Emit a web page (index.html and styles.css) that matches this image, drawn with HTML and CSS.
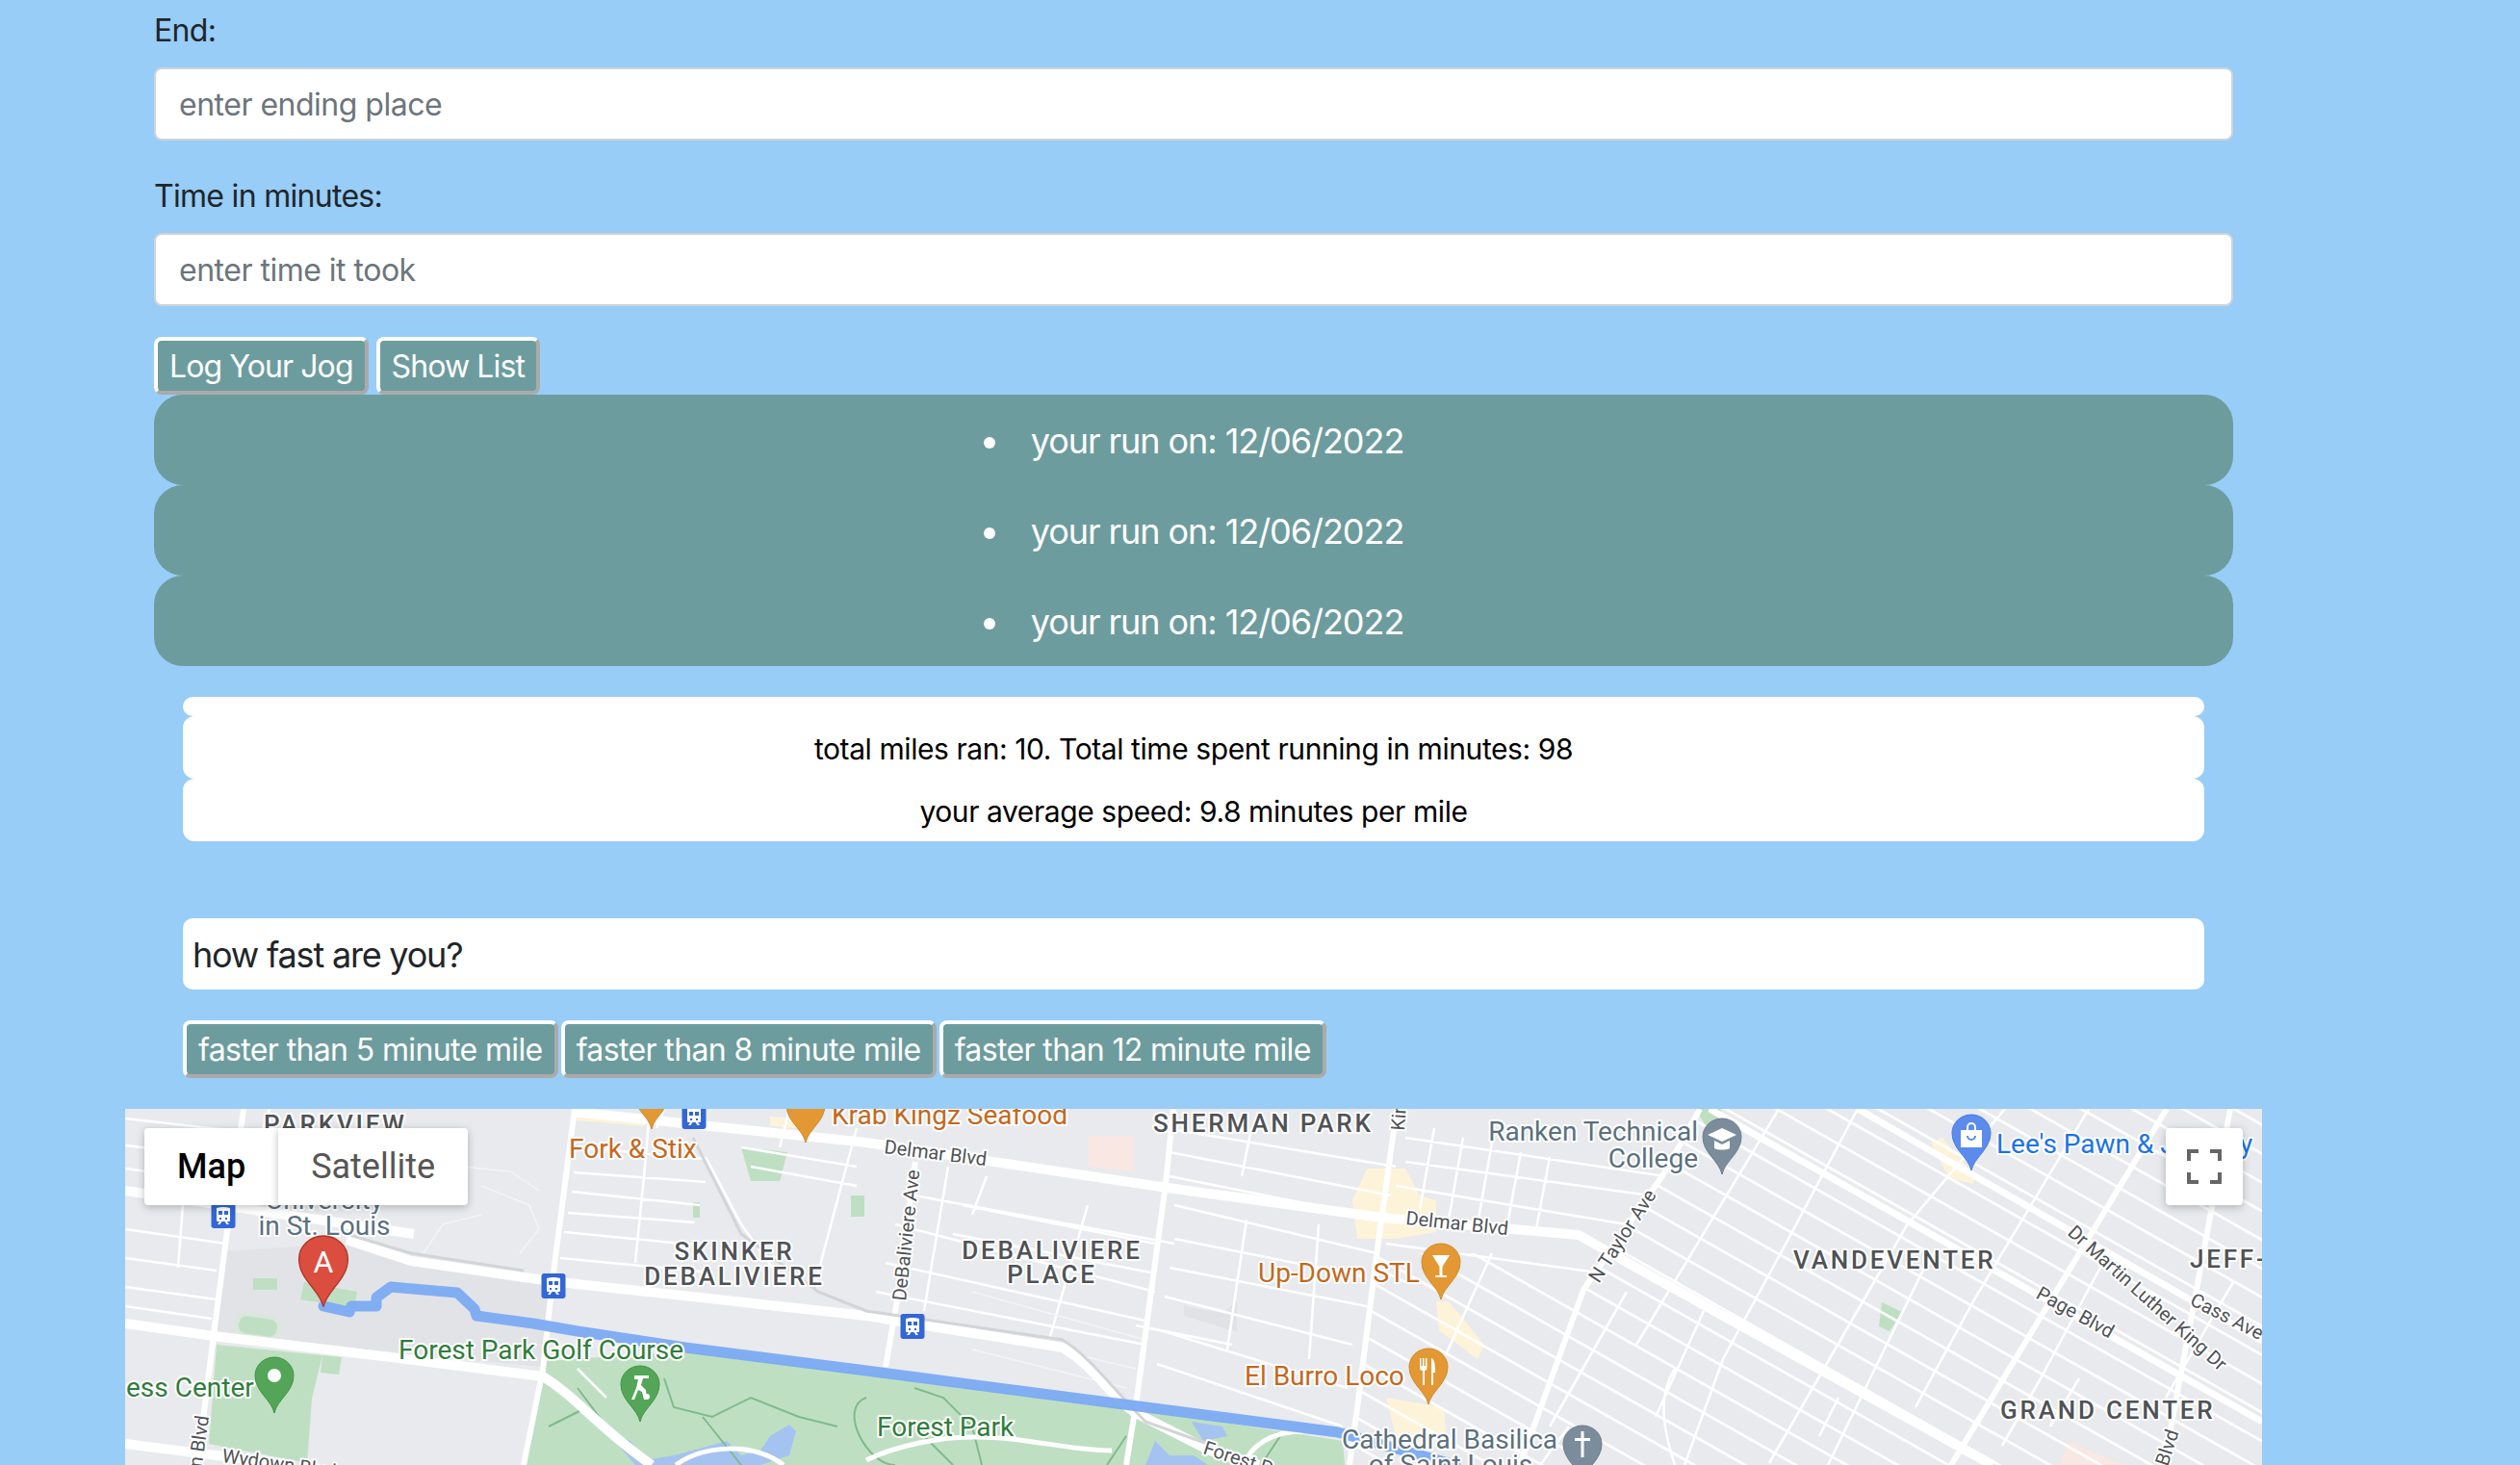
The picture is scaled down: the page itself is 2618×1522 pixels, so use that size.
FILE: index.html
```html
<!DOCTYPE html>
<html lang="en">
<head>
<meta charset="UTF-8" />
<title>Log Your Jog</title>
<link rel="stylesheet" href="styles.css">
</head>
<body>

<div class="container">
  <form class="jogForm">
    <label for="end">End:</label>
    <input type="text" id="end" placeholder="enter ending place" />

    <label for="time">Time in minutes:</label>
    <input type="text" id="time" placeholder="enter time it took" />

    <div class="btnRow">
      <button type="button">Log Your Jog</button>
      <button type="button">Show List</button>
    </div>
  </form>

  <ul class="runList">
    <li>your run on: 12/06/2022</li>
    <li>your run on: 12/06/2022</li>
    <li>your run on: 12/06/2022</li>
  </ul>

  <div class="stats">
    <div class="stat statEmpty"></div>
    <div class="stat">total miles ran: 10. Total time spent running in minutes: 98</div>
    <div class="stat">your average speed: 9.8 minutes per mile</div>
  </div>

  <div class="speedTitle">how fast are you?</div>

  <div class="btnRow speedBtns">
    <button type="button">faster than 5 minute mile</button>
    <button type="button">faster than 8 minute mile</button>
    <button type="button">faster than 12 minute mile</button>
  </div>

  <div class="map">
    <svg class="mapCanvas" viewBox="0 0 2220 370" width="2220" height="370">
      <defs>
        <pattern id="diagStreets" width="300" height="26" patternUnits="userSpaceOnUse" patternTransform="rotate(29.5)">
          <rect class="street-fill" x="0" y="12" width="300" height="2.6" />
        </pattern>
        <path id="pin" d="M0 58C-3 44-20 36-20 19A20 19 0 1 1 20 19C20 36 3 44 0 58Z" />
        <g id="transit">
          <rect class="transit-bg" x="-12.5" y="-13" width="25" height="26" rx="3" />
          <path class="white" d="M-7-8Q0-10 7-8V5Q7 6 6 6H4L6 9H3.500L1.500 6H-1.500L-3.500 9H-6L-4 6H-6Q-7 6-7 5Z" />
          <path class="transit-bg" d="M-5-5H-1V-1H-5ZM1-5H5V-1H1ZM-4 2H-2V4H-4ZM2 2H4V4H2Z" />
        </g>
      </defs>

      <!-- areas -->
      <polygon class="campus" points="100,148 230,140 440,185 434,268 95,236" />
      <polygon class="park" points="414,370 437,262 582,252 770,275 1045,311 1265,345 1267,370" />
      <polygon class="park" points="95,245 205,256 194,301 189,368 87,348" />
      <rect class="park" x="133" y="176" width="25" height="12" />
      <polygon class="park" points="186,180 241,190 238,207 182,198" />
      <rect class="park-line" x="116" y="215" width="44" height="22" rx="10" transform="rotate(8 138 226)" />
      <polygon class="park" points="205,256 225,258 222,276 203,274" />
      <polygon class="park" points="640,40 688,45 680,75 650,75" />
      <rect class="park" x="754" y="90" width="14" height="22" />
      <rect class="park" x="590" y="97" width="7" height="16" />
      <polygon class="park" points="1631,0 1657,0 1665,15 1645,22" />
      <polygon class="park" points="1825,201 1846,211 1833,231 1822,226" />
      <polygon class="beige" points="1290,62 1330,62 1345,90 1362,95 1362,128 1320,135 1280,135 1275,95" />
      <polygon class="beige" points="1362,200 1375,200 1412,245 1405,260 1365,230" />
      <polygon class="beige" points="1310,300 1370,310 1372,335 1345,360 1320,340" />
      <polygon class="beige" points="1876,35 1888,30 1922,70 1920,78 1895,72" />
      <polygon class="beige" points="465,2 540,10 540,18 470,12" />
      <polygon class="beige" points="670,8 700,10 700,20 670,18" />
      <polygon class="pink" points="1000,28 1048,28 1048,65 1000,60" />
      <polygon class="pink" points="2009,370 2019,345 2075,370" />
      <polygon class="darkblock" points="1140,212 1155,200 1155,232 1100,215 1100,205" />

      <!-- water -->
      <path class="water" d="M500 335L525 345L540 365L570 360L600 352L625 345L640 360L660 355L670 340L690 328L697 335L690 360L660 370H530Z" />
      <path class="water" d="M1108 325L1140 330L1145 340L1120 345ZM1060 370L1070 345L1085 360L1110 360L1125 370Z" />

      <!-- park trails -->
      <path class="trail" d="M470 290L500 330M560 280L570 310L610 320L650 300L700 320L740 330M770 300C740 310 770 370 800 370M820 290L850 300L880 330L890 370M1040 340L1020 370M1200 340L1180 370M440 330L480 310M600 320L640 370M830 340L860 370" />

      <!-- diagonal grid -->
      <polygon class="diag" fill="url(#diagStreets)" points="1300,150 1420,150 1515,188 1600,65 1636,0 2220,0 2220,370 1272,370" />

      <!-- minor streets -->
      <path class="road-minor" d="M0 10L105 22M0 38L105 50M0 62L105 76M0 125L105 140M0 155L95 168M0 185L95 198M0 205L90 218
        M115 25L105 80M60 100L55 165M150 0L140 30
        M470 40L605 52M466 66L603 76M464 86L597 100M460 108L592 118M456 128L600 142M452 155L610 170M448 176L650 200
        M545 0L540 60M540 60L530 160M603 50L640 120M640 40L760 60M650 60L760 80M760 20L720 170M640 120L680 175M690 0L680 40
        M470 270L500 300M560 0L552 20
        M855 60L830 210M800 120L1070 190M790 160L1060 220M780 190L1060 245M1000 100L960 240M895 70L880 110M820 90L1090 140
        M870 100L1070 140M860 130L1065 170M1090 100L1300 150M1090 135L1290 175M1085 165L1290 205M1080 195L1275 245M1075 230L1270 290M1072 265L1265 330
        M1080 20L1320 60M1085 45L1315 90M1085 70L1310 115M1170 20L1160 70M1240 120L1230 260M1165 115L1145 250M1150 245L1050 225
        M1330 30L1600 70M1330 55L1585 90M1320 80L1560 120M1310 140L1530 170M1300 165L1330 180
        M1360 20L1345 105M1390 30L1375 115M1420 35L1405 120M1450 45L1435 125M1480 50L1465 130
        M1718 0L1570 245M1800 0L1728 135L1660 260L1620 370M1953 0L1851 121L1708 368M1871 161L1769 370M1420 150L1370 260
        M1500 330L1470 370M1560 190L1480 330M1640 210L1590 320M2040 0L1920 200L1860 310M2060 150L1990 280L1950 350
        M2190 180L2120 300M1610 270C1590 300 1600 340 1610 370M1780 300L1760 340M2030 280L2000 330" />
      <path class="road-faint" d="M350 60L400 65L430 85M370 80L420 100L430 125L410 150M310 150L330 120L370 110M880 190L1060 240M880 230L1050 270M880 250L1040 290" />

      <!-- main roads -->
      <path class="road-mid" d="M123 0L108 111L92 235L75 370M467 0L444 178L434 271L414 370M1089 0L1081 78L1051 301L1040 370
        M1321 0L1301 145L1280 311L1272 370M821 55L801 205L790 268M1636 0L1600 65L1515 188L1449 370M2121 0L1897 370M2187 0L2118 370" />
      <path class="road-major" d="M465 3L770 35L1076 81L1306 113L1510 131L1570 165L1940 370M0 85L120 103L300 130" />
      <path class="road-major" d="M230 136L297 158L414 175L460 181L770 215L974 248C1010 270 1020 295 1048 315L1127 355L1178 370" />
      <path class="road-major" d="M0 223L92 236L276 258L434 278C470 300 490 330 547 370M0 348L174 370" />
      <path class="road-diag" d="M1646 0L2220 325M1800 0L2220 241" />
      <path class="road-thin" d="M572 370C600 350 650 345 684 370M770 365C800 350 850 340 882 341C930 340 980 355 1025 355M1224 335C1190 335 1168 351 1163 370" />
      <path class="rail" d="M230 130L297 150L414 168M590 30L640 130L720 190L770 210L974 240C1000 255 1030 295 1060 325L1130 350" />

      <!-- route -->
      <path class="route" d="M206 205L233 211L235 205L261 205L261 196L276 185L345 191L363 208L365 215L424 223L470 231L582 248L770 272L1045 308L1260 336L1382 370" />

      <!-- labels under the pins -->
      <text class="lbl area" x="144" y="25">PARKVIEW</text>
      <text class="lbl edu" text-anchor="middle" x="207" y="104">University</text>
      <text class="lbl edu" text-anchor="middle" x="207" y="131">in St. Louis</text>
      <text class="lbl food" x="461" y="51">Fork &amp; Stix</text>
      <text class="lbl food" x="734" y="16">Krab Kingz Seafood</text>
      <text class="lbl area" x="1068" y="24">SHERMAN PARK</text>
      <text class="lbl edu" text-anchor="end" x="1634" y="33">Ranken Technical</text>
      <text class="lbl edu" text-anchor="end" x="1634" y="61">College</text>
      <text class="lbl area" text-anchor="middle" x="633" y="157">SKINKER</text>
      <text class="lbl area" text-anchor="middle" x="633" y="183">DEBALIVIERE</text>
      <text class="lbl area" text-anchor="middle" x="963" y="156">DEBALIVIERE</text>
      <text class="lbl area" text-anchor="middle" x="963" y="181">PLACE</text>
      <text class="lbl area" x="1733" y="166">VANDEVENTER</text>
      <text class="lbl area" x="1948" y="322">GRAND CENTER</text>
      <text class="lbl area" x="2145" y="165">JEFF-</text>
      <text class="lbl park-text" x="284" y="260">Forest Park Golf Course</text>
      <text class="lbl park-text" x="1" y="299">ess Center</text>
      <text class="lbl park-text" x="781" y="340">Forest Park</text>
      <text class="lbl food" x="1177" y="180">Up-Down STL</text>
      <text class="lbl food" x="1163" y="287">El Burro Loco</text>
      <text class="lbl edu" x="1264" y="353">Cathedral Basilica</text>
      <text class="lbl edu" text-anchor="middle" x="1377" y="379">of Saint Louis</text>
      <text class="lbl shop" x="1944" y="46">Lee's Pawn &amp; Jewelry</text>

      <text class="lbl road" transform="translate(788 46) rotate(7)">Delmar Blvd</text>
      <text class="lbl road" transform="translate(1330 120) rotate(6)">Delmar Blvd</text>
      <text class="lbl road" transform="translate(811 200) rotate(-84)">DeBaliviere Ave</text>
      <text class="lbl road" transform="translate(1329 23) rotate(-86)">Kingshighway</text>
      <text class="lbl road" transform="translate(1531 182) rotate(-57)">N Taylor Ave</text>
      <text class="lbl road" transform="translate(2017 130) rotate(42)">Dr Martin Luther King Dr</text>
      <text class="lbl road" transform="translate(1984 196) rotate(29)">Page Blvd</text>
      <text class="lbl road" transform="translate(2144 203) rotate(27)">Cass Ave</text>
      <text class="lbl road" transform="translate(74 413) rotate(-82)">Union Blvd</text>
      <text class="lbl road" transform="translate(100 367) rotate(8)">Wydown Blvd</text>
      <text class="lbl road" transform="translate(1119 358) rotate(18)">Forest Park Pkwy</text>
      <text class="lbl road" transform="translate(2122 372) rotate(-72)">Blvd</text>

      <!-- transit stops -->
      <use href="#transit" x="591" y="8" />
      <use href="#transit" x="102" y="111" />
      <use href="#transit" x="445" y="184" />
      <use href="#transit" x="818" y="226" />

      <!-- pins -->
      <use class="pin-food" href="#pin" x="547" y="-37" />
      <use class="pin-food" href="#pin" x="707" y="-23" />

      <g transform="translate(206 132) scale(1.27)">
        <use class="pin-a" href="#pin" />
      </g>
      <text class="pinLetter" text-anchor="middle" x="206" y="170">A</text>

      <g transform="translate(155 258)">
        <use class="pin-park" href="#pin" />
        <circle class="white" cx="0" cy="19" r="7" />
      </g>
      <g transform="translate(535 267)">
        <use class="pin-park" href="#pin" />
        <path class="white" d="M-6 10H9V13H3L1 20L6 25L7 35H4L2 27L-2 25L-6 35H-9L-4 23L-2 14H-6ZM7 29A3 3 0 1 1 7 35A3 3 0 0 1 7 29Z" />
      </g>
      <g transform="translate(1367 140)">
        <use class="pin-food" href="#pin" />
        <path class="white" d="M-9 12H9L1.500 24V33H6V35H-6V33H-1.500V24Z" />
      </g>
      <g transform="translate(1354 249)">
        <use class="pin-food" href="#pin" />
        <path class="white" d="M-9 10H-7.500V18H-6V10H-4.500V18H-3V10H-1.500V20C-1.500 22-3 23-4 23V38H-6V23C-8 23-9 22-9 20ZM3 10C6 11 7 15 7 25H5V38H3Z" />
      </g>
      <g transform="translate(1659 10)">
        <use class="pin-edu" href="#pin" />
        <path class="white" d="M0 10L15 17L0 24L-15 17ZM-8 23L0 27L8 23V31C4 33-4 33-8 31Z" />
      </g>
      <g transform="translate(1918 6)">
        <use class="pin-shop" href="#pin" />
        <path class="white" d="M-11 16H-5V13A5 5 0 0 1 5 13V16H11V34H-11ZM-3 16H3V13A3 3 0 0 0-3 13Z" />
        <path class="pinCut" d="M-4 22A4 4 0 0 0 4 22" />
      </g>
      <g transform="translate(1514 329)">
        <use class="pin-edu" href="#pin" />
        <path class="white" d="M-1.500 6H1.500V13H8V16H1.500V33H-1.500V16H-8V13H-1.500Z" />
      </g>
    </svg>

    <div class="mapTypes">
      <div class="mapType mapTypeOn">Map</div>
      <div class="mapType">Satellite</div>
    </div>

    <div class="fullscreen">
      <svg viewBox="0 0 36 36" width="36" height="36">
        <path class="fsIcon" d="M1 12V1H12M24 1H35V12M35 24V35H24M12 35H1V24" />
      </svg>
    </div>
  </div>
</div>

</body>
</html>
```

FILE: styles.css
```css
body {
  font-family: Inter, "Liberation Sans", sans-serif;
  margin: 0;
  height: 1522px;
  overflow: hidden;
  background: #97cdf7;
  color: #212529;
  font-size: 32px;
  line-height: 48px;
}

.container {
  width: 2160px;
  margin-left: 160px;
  padding-top: 6px;
}

label {
  display: block;
  padding-top: 2px;
  margin-bottom: 14px;
  letter-spacing: -0.7px;
}

input {
  display: block;
  width: 100%;
  height: 76px;
  box-sizing: border-box;
  margin-bottom: 32px;
  padding: 0 24px;
  border: 2px solid #ced4da;
  border-radius: 8px;
  background: #fff;
  font: inherit;
  letter-spacing: -0.5px;
  outline: none;
}

input::placeholder {
  color: #6c757d;
}

.btnRow {
  display: flex;
  gap: 8px;
}

button {
  height: 60px;
  box-sizing: border-box;
  padding: 2px 12px 0;
  border: 4px solid;
  border-color: #fff #aaa #aaa #fff;
  border-radius: 8px;
  background: #6d9c9e;
  color: #fff;
  font: inherit;
  letter-spacing: -0.9px;
}

.runList {
  list-style-position: inside;
  margin: 0;
  padding: 0;
  text-align: center;
}

.runList li {
  height: 94px;
  line-height: 96px;
  border-radius: 30px;
  background: #6d9c9e;
  color: #fff;
  font-size: 36px;
  letter-spacing: -1.05px;
}

.stats {
  margin: 32px 30px 0;
  text-align: center;
  color: #000;
}

.stat {
  height: 65px;
  line-height: 68px;
  border-radius: 12px;
  background: #fff;
  font-size: 30px;
  letter-spacing: -0.42px;
}

.statEmpty {
  height: 20px;
  border-radius: 10px;
}

.speedTitle {
  margin: 80px 30px 0;
  height: 74px;
  line-height: 76px;
  padding-left: 10px;
  border-radius: 10px;
  background: #fff;
  font-size: 36px;
  letter-spacing: -1.2px;
}

.speedBtns {
  gap: 3px;
  margin: 32px 30px;
}

.speedBtns button {
  letter-spacing: -0.63px;
}

.map {
  position: relative;
  width: 2220px;
  height: 370px;
  margin-left: -30px;
  overflow: hidden;
  background: #e8eaed;
}

.mapCanvas {
  display: block;
  font-family: Roboto, sans-serif;
}

.mapTypes {
  position: absolute;
  left: 20px;
  top: 20px;
  display: flex;
  height: 80px;
  font-family: Roboto, sans-serif;
  font-size: 36px;
  line-height: 80px;
}

.mapType {
  padding: 0 34px;
  background: #fff;
  color: #565656;
  border-radius: 0 4px 4px 0;
  box-shadow: 0 2px 8px rgba(0,0,0,0.25);
}

.mapTypeOn {
  color: #000;
  font-weight: 500;
  border-radius: 4px 0 0 4px;
}

.fullscreen {
  position: absolute;
  left: 2120px;
  top: 20px;
  display: flex;
  align-items: center;
  justify-content: center;
  width: 80px;
  height: 80px;
  border-radius: 4px;
  background: #fff;
  box-shadow: 0 2px 8px rgba(0,0,0,0.25);
}

.fsIcon {
  fill: none;
  stroke: #666;
  stroke-width: 6;
}

/* map drawing */
.street-fill, .white { fill: #fff; }
.campus { fill: #e2e3e7; }
.park { fill: #bfdfc3; }
.park-line { fill: #bfdfc3; stroke: #d8e8da; stroke-width: 4; }
.beige { fill: #fdf3d9; }
.pink { fill: #f9e7e3; }
.darkblock { fill: #e1e2e5; }
.water { fill: #a5c3f1; }
.trail { fill: none; stroke: #7fbb89; stroke-width: 2; }
.road-minor, .road-mid, .road-major, .road-diag, .road-thin, .road-faint { fill: none; stroke: #fff; stroke-linejoin: round; }
.road-minor { stroke-width: 2.6; }
.road-faint { stroke-width: 1.5; stroke: #f3f4f6; }
.road-mid { stroke-width: 6; }
.road-major { stroke-width: 10; }
.road-diag { stroke-width: 7; }
.road-thin { stroke-width: 5; }
.rail { fill: none; stroke: #d2d4d8; stroke-width: 3; }
.route { fill: none; stroke: #7baaf3; stroke-width: 11; stroke-linejoin: round; stroke-linecap: round; opacity: 0.95; }

.lbl {
  paint-order: stroke;
  stroke: #fff;
  stroke-width: 4px;
  stroke-linejoin: round;
  font-size: 28px;
}

.area { font-size: 26px; font-weight: 500; letter-spacing: 2.8px; fill: #4f5256; }
.food { fill: #c5681c; }
.edu { fill: #5b7080; }
.park-text { fill: #2f7d3a; }
.shop { fill: #1a73e8; }
.road { font-size: 20px; fill: #4f5256; }

.pin-food { fill: #e49833; stroke: #d08a2c; }
.pin-park { fill: #53a658; stroke: #45904a; }
.pin-edu { fill: #7b8d9c; stroke: #6c7d8b; }
.pin-shop { fill: #5a8bed; stroke: #4c7bdc; }
.pin-a { fill: #db4d3f; stroke: #ad3327; stroke-width: 1; }
.pinCut { fill: none; stroke: #5a8bed; stroke-width: 2; }
.pinLetter { fill: #fff; font-size: 32px; }
.transit-bg { fill: #3367d6; }
```
